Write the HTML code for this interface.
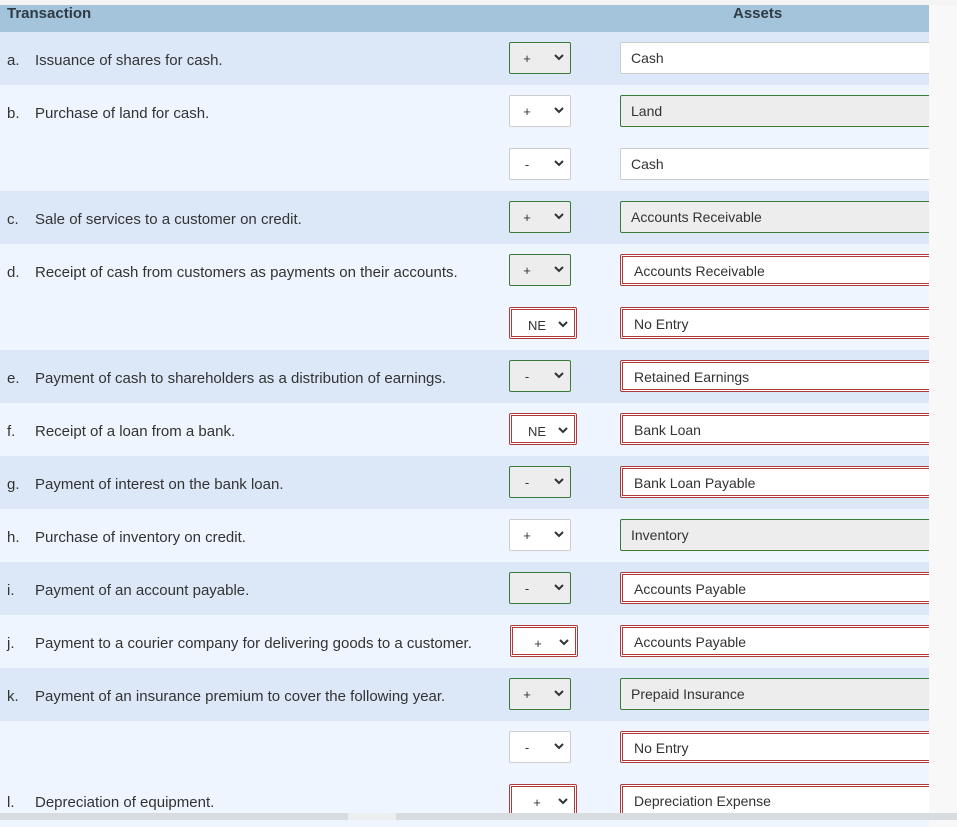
<!DOCTYPE html>
<html><head><meta charset="utf-8"><style>
*{box-sizing:border-box;margin:0;padding:0}
body{width:957px;height:820px;overflow:hidden;background:#f8f8f8;font-family:"Liberation Sans",sans-serif;color:#333;position:relative}
.top{position:absolute;left:0;top:0;width:957px;height:5px;background:#f4f4f4}
.hdr{position:absolute;left:0;top:5px;width:929px;height:27px;background:#a4c4dc;font-size:15px;font-weight:bold;color:#2f3b44}
.row{position:absolute;left:0;width:929px;height:53px;font-size:15px;overflow:hidden}
.dk{background:#dce8f8}.lt{background:#eef5fe}
.lab{position:absolute;left:7px;top:20px}
.txt{position:absolute;left:35px;top:20px}
.sel{position:absolute;left:509px;top:10px;width:62px;height:32px;border:1px solid #ccc;background:#fff;border-radius:2px;font-size:13px}
.sel .v{position:absolute;left:0;width:34px;text-align:center;top:8px}
.sel svg{position:absolute;right:6px;top:11px}
.sel.g{border-color:#3a7a3a;background:#ededed}
.sel.r{width:68px;border:3px double #b03a3a}
.sel.r .v{top:8px;width:50px}
.inp{position:absolute;left:620px;top:10px;width:320px;height:32px;border:1px solid #ccc;background:#fff;border-radius:2px;font-size:14px;padding:7px 10px}
.inp.g{border-color:#3a7a3a;background:#ededed}
.inp.r{border:3px double #b03a3a;padding:6px 11px}
.sb{position:absolute;left:0;top:813px;width:957px;height:7px;background:#d8dbe0}
.sb i{position:absolute;left:348px;top:0;width:48px;height:7px;background:#eceef0}
</style></head><body>
<div class="top"></div>
<div class="hdr"><span style="position:absolute;left:7px;top:0">Transaction</span><span style="position:absolute;left:733px;top:0">Assets</span></div>

<div class="row dk" style="top:32px"><span class="lab">a.</span><span class="txt">Issuance of shares for cash.</span><div class="sel g"><span class="v">+</span><svg width="10" height="7"><path d="M1 1l4 4 4-4" stroke="#333" stroke-width="2" fill="none"/></svg></div><div class="inp">Cash</div></div>
<div class="row lt" style="top:85px"><span class="lab">b.</span><span class="txt">Purchase of land for cash.</span><div class="sel"><span class="v">+</span><svg width="10" height="7"><path d="M1 1l4 4 4-4" stroke="#333" stroke-width="2" fill="none"/></svg></div><div class="inp g">Land</div></div>
<div class="row lt" style="top:138px"><div class="sel"><span class="v">-</span><svg width="10" height="7"><path d="M1 1l4 4 4-4" stroke="#333" stroke-width="2" fill="none"/></svg></div><div class="inp">Cash</div></div>
<div class="row dk" style="top:191px"><span class="lab">c.</span><span class="txt">Sale of services to a customer on credit.</span><div class="sel g"><span class="v">+</span><svg width="10" height="7"><path d="M1 1l4 4 4-4" stroke="#333" stroke-width="2" fill="none"/></svg></div><div class="inp g">Accounts Receivable</div></div>
<div class="row lt" style="top:244px"><span class="lab">d.</span><span class="txt">Receipt of cash from customers as payments on their accounts.</span><div class="sel g"><span class="v">+</span><svg width="10" height="7"><path d="M1 1l4 4 4-4" stroke="#333" stroke-width="2" fill="none"/></svg></div><div class="inp r">Accounts Receivable</div></div>
<div class="row lt" style="top:297px"><div class="sel r"><span class="v">NE</span><svg width="10" height="7"><path d="M1 1l4 4 4-4" stroke="#333" stroke-width="2" fill="none"/></svg></div><div class="inp r">No Entry</div></div>
<div class="row dk" style="top:350px"><span class="lab">e.</span><span class="txt">Payment of cash to shareholders as a distribution of earnings.</span><div class="sel g"><span class="v">-</span><svg width="10" height="7"><path d="M1 1l4 4 4-4" stroke="#333" stroke-width="2" fill="none"/></svg></div><div class="inp r">Retained Earnings</div></div>
<div class="row lt" style="top:403px"><span class="lab">f.</span><span class="txt">Receipt of a loan from a bank.</span><div class="sel r"><span class="v">NE</span><svg width="10" height="7"><path d="M1 1l4 4 4-4" stroke="#333" stroke-width="2" fill="none"/></svg></div><div class="inp r">Bank Loan</div></div>
<div class="row dk" style="top:456px"><span class="lab">g.</span><span class="txt">Payment of interest on the bank loan.</span><div class="sel g"><span class="v">-</span><svg width="10" height="7"><path d="M1 1l4 4 4-4" stroke="#333" stroke-width="2" fill="none"/></svg></div><div class="inp r">Bank Loan Payable</div></div>
<div class="row lt" style="top:509px"><span class="lab">h.</span><span class="txt">Purchase of inventory on credit.</span><div class="sel"><span class="v">+</span><svg width="10" height="7"><path d="M1 1l4 4 4-4" stroke="#333" stroke-width="2" fill="none"/></svg></div><div class="inp g">Inventory</div></div>
<div class="row dk" style="top:562px"><span class="lab">i.</span><span class="txt">Payment of an account payable.</span><div class="sel g"><span class="v">-</span><svg width="10" height="7"><path d="M1 1l4 4 4-4" stroke="#333" stroke-width="2" fill="none"/></svg></div><div class="inp r">Accounts Payable</div></div>
<div class="row lt" style="top:615px"><span class="lab">j.</span><span class="txt">Payment to a courier company for delivering goods to a customer.</span><div class="sel r" style="left:510px"><span class="v">+</span><svg width="10" height="7"><path d="M1 1l4 4 4-4" stroke="#333" stroke-width="2" fill="none"/></svg></div><div class="inp r">Accounts Payable</div></div>
<div class="row dk" style="top:668px"><span class="lab">k.</span><span class="txt">Payment of an insurance premium to cover the following year.</span><div class="sel g"><span class="v">+</span><svg width="10" height="7"><path d="M1 1l4 4 4-4" stroke="#333" stroke-width="2" fill="none"/></svg></div><div class="inp g">Prepaid Insurance</div></div>
<div class="row lt" style="top:721px"><div class="sel"><span class="v">-</span><svg width="10" height="7"><path d="M1 1l4 4 4-4" stroke="#333" stroke-width="2" fill="none"/></svg></div><div class="inp r">No Entry</div></div>
<div class="row lt" style="top:774px"><span class="lab">l.</span><span class="txt">Depreciation of equipment.</span><div class="sel r"><span class="v">+</span><svg width="10" height="7"><path d="M1 1l4 4 4-4" stroke="#333" stroke-width="2" fill="none"/></svg></div><div class="inp r">Depreciation Expense</div></div>
<div class="sb"><i></i></div>
</body></html>
